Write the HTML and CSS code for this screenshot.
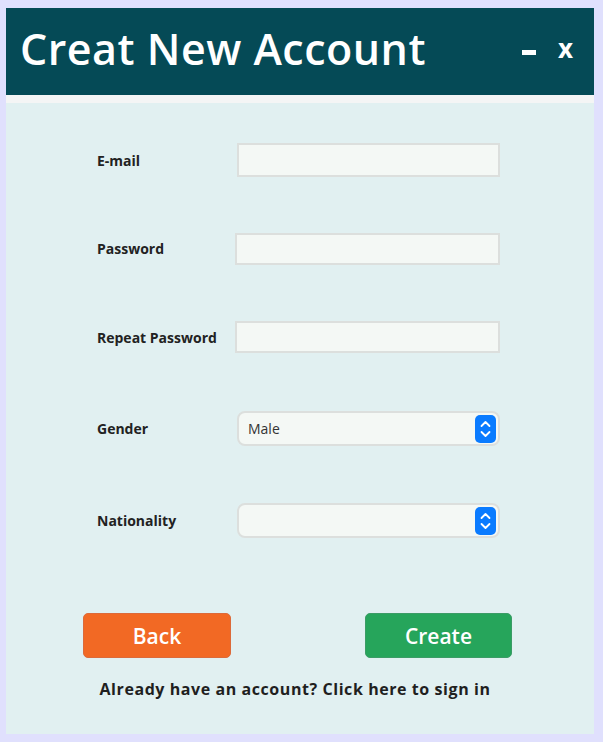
FILE: index.html
```html
<!DOCTYPE html>
<html>
<head>
<meta charset="utf-8">
<link rel="stylesheet" href="styles.css">
</head>
<body>
<div class="window">
  <header class="titlebar">
    <h1 class="title">Creat New Account</h1>
    <div class="controls">
      <span class="ctl-min"></span>
      <span class="ctl-close">x</span>
    </div>
  </header>
  <div class="band"></div>
  <main class="content">
    <div class="form">
      <div class="row">
        <label class="label">E-mail</label>
        <input class="field field-a" type="text">
      </div>
      <div class="row">
        <label class="label">Password</label>
        <input class="field field-b" type="password">
      </div>
      <div class="row">
        <label class="label">Repeat Password</label>
        <input class="field field-b" type="password">
      </div>
      <div class="row">
        <label class="label">Gender</label>
        <div class="select">
          <span class="select-text">Male</span>
          <svg class="spin" width="21" height="28" viewBox="0 0 21 28">
            <rect x="0" y="0" width="21" height="28" rx="5" fill="#0a7bff"/>
            <path d="M6.5 11 L10.5 7 L14.5 11" fill="none" stroke="#fff" stroke-width="1.8" stroke-linecap="round" stroke-linejoin="round"/>
            <path d="M6.5 17 L10.5 21 L14.5 17" fill="none" stroke="#fff" stroke-width="1.8" stroke-linecap="round" stroke-linejoin="round"/>
          </svg>
        </div>
      </div>
      <div class="row">
        <label class="label">Nationality</label>
        <div class="select">
          <span class="select-text"></span>
          <svg class="spin" width="21" height="28" viewBox="0 0 21 28">
            <rect x="0" y="0" width="21" height="28" rx="5" fill="#0a7bff"/>
            <path d="M6.5 11 L10.5 7 L14.5 11" fill="none" stroke="#fff" stroke-width="1.8" stroke-linecap="round" stroke-linejoin="round"/>
            <path d="M6.5 17 L10.5 21 L14.5 17" fill="none" stroke="#fff" stroke-width="1.8" stroke-linecap="round" stroke-linejoin="round"/>
          </svg>
        </div>
      </div>
    </div>
    <div class="buttons">
      <button class="btn btn-back">Back</button>
      <button class="btn btn-create">Create</button>
    </div>
    <p class="signin">Already have an account? Click here to sign in</p>
  </main>
</div>
</body>
</html>
```
FILE: styles.css
```css
* { box-sizing: border-box; }
html, body { margin: 0; padding: 0; }
body {
  background: #e0e0fd;
  width: 603px;
  height: 742px;
  padding: 8px 9px 8px 6px;
  font-family: "Open Sans", "Noto Sans", sans-serif;
  overflow: hidden;
}
.window {
  width: 588px;
  height: 726px;
  display: flex;
  flex-direction: column;
  background: #e1f0f1;
}
.titlebar {
  height: 87px;
  background: #054a56;
  display: flex;
  align-items: center;
  justify-content: space-between;
  padding: 0 21px 0 14px;
  color: #ffffff;
}
.title {
  margin: 0;
  font-size: 43px;
  font-weight: 600;
  letter-spacing: 0.5px;
  line-height: 1;
  margin-top: -6px;
}
.controls {
  display: flex;
  align-items: center;
  gap: 22px;
  margin-top: -8px;
}
.ctl-min {
  display: block;
  width: 14px;
  height: 5px;
  background: #fff;
  margin-top: 10px;
  margin-left: -3px;
}
.ctl-close {
  font-size: 26px;
  font-weight: 700;
  line-height: 1;
}
.band {
  height: 8px;
  background: #f4f5f5;
}
.content {
  flex: 1;
  display: flex;
  flex-direction: column;
}
.form {
  display: grid;
  grid-template-rows: 88px 89px 88px 95px 89px;
  margin-top: 13px;
  padding-left: 91px;
}
.row {
  display: flex;
  align-items: center;
}
.label {
  width: 140px;
  font-size: 14px;
  font-weight: 700;
  color: #222;
}
.field {
  height: 34px;
  background: #f4f8f5;
  border: 2px solid #dcdfdd;
  outline: none;
  padding: 0 8px;
  font-family: inherit;
}
.field-a { width: 263px; margin-left: 0; }
.field-b { width: 265px; height: 32px; margin-left: -2px; }
.select {
  width: 263px;
  height: 35px;
  background: #f4f8f5;
  border: 2px solid #dcdfdd;
  border-radius: 8px;
  display: flex;
  align-items: center;
  justify-content: space-between;
  padding: 0 2px 0 9px;
}
.select-text {
  font-size: 14px;
  color: #333;
}
.spin { display: block; }
.buttons {
  display: flex;
  justify-content: space-between;
  padding: 0 82px 0 77px;
  margin-top: 48px;
}
.btn {
  width: 148px;
  height: 45px;
  border-radius: 5px;
  color: #fff;
  font-family: inherit;
  font-size: 21px;
  font-weight: 600;
  padding: 0;
  cursor: pointer;
}
.btn-back {
  background: #f26924;
  border: 1px solid #dc6a3a;
}
.btn-create {
  width: 147px;
  background: #26a55b;
  border: 1px solid #3b9c66;
}
.signin {
  margin: 20px 0 0 0;
  text-align: center;
  font-size: 16px;
  font-weight: 700;
  color: #1f1f1f;
  padding-right: 10px;
  letter-spacing: 0.57px;
}
```
